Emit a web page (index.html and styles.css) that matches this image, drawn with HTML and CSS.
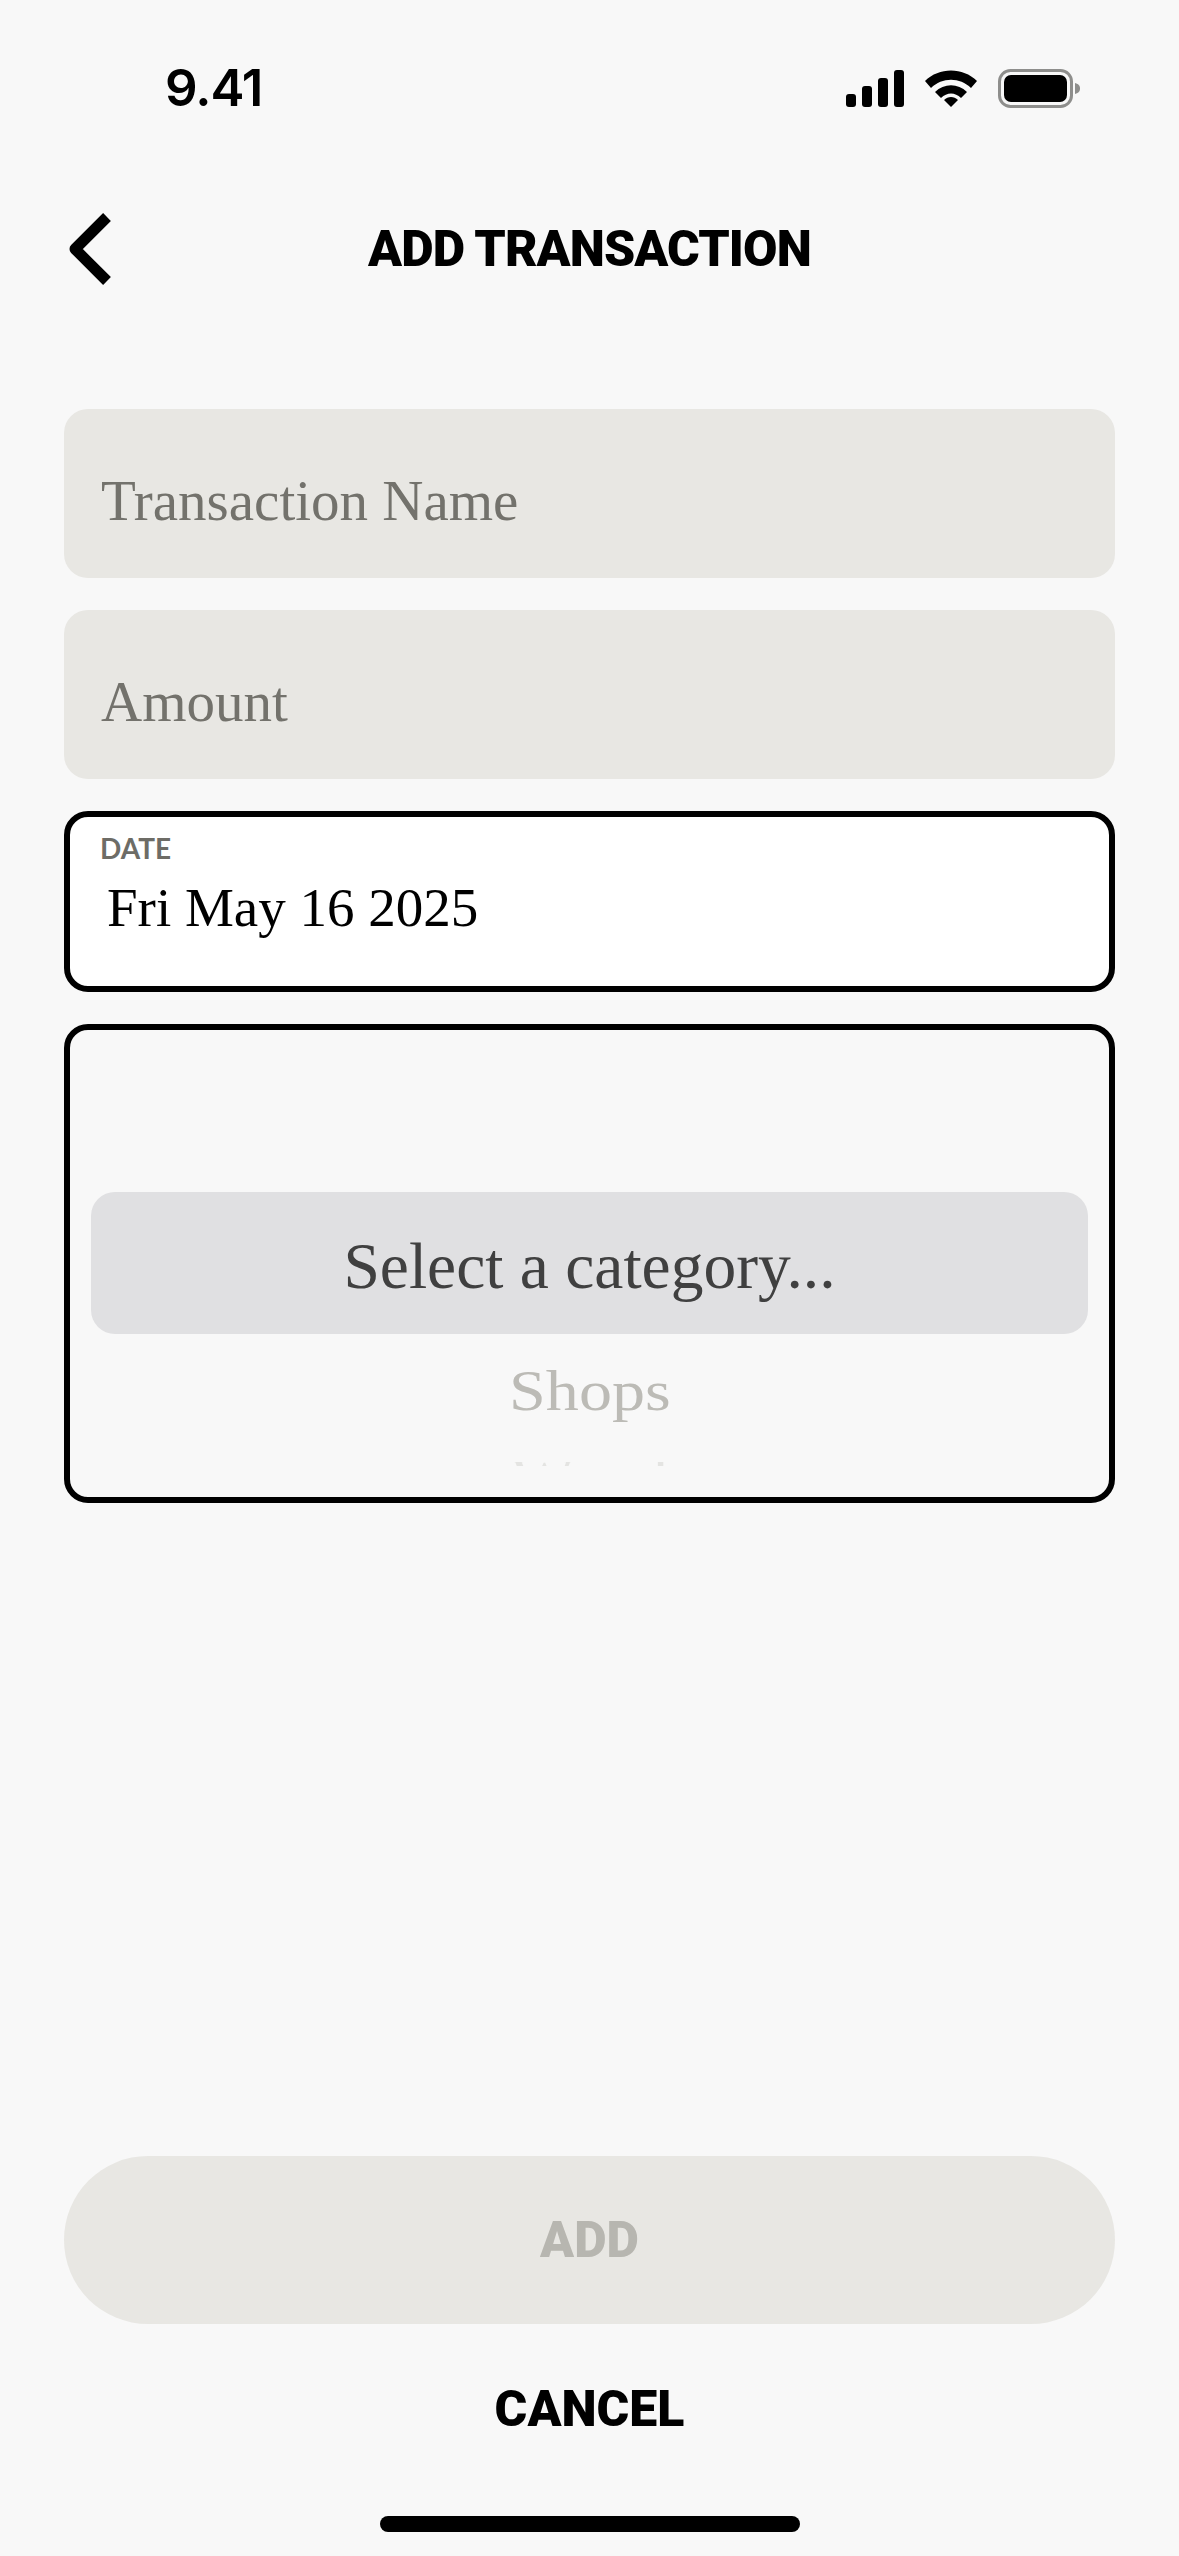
FILE: index.html
```html
<!DOCTYPE html>
<html lang="en">
<head>
    <meta charset="UTF-8">
    <meta name="viewport" content="width=device-width, initial-scale=1.0">
    <title>Add Transaction</title>
    <link rel="stylesheet" href="styles.css">
</head>
<body>
    <div class="screen">
        <div class="status-bar">
            <span class="clock">9.41</span>
            <div class="status-icons">
                <svg class="ic-signal" width="58" height="37" viewBox="0 0 58 37">
                    <rect x="0" y="24" width="10" height="13" rx="3"/>
                    <rect x="16" y="16" width="10" height="21" rx="3"/>
                    <rect x="32" y="8" width="10" height="29" rx="3"/>
                    <rect x="48" y="0" width="10" height="37" rx="3"/>
                </svg>
                <svg class="ic-wifi" width="52" height="37" viewBox="0 0 52 37">
                    <path d="M0 11 C14 -3 38 -3 52 11 L46 18 C35 7 17 7 6 18 Z"/>
                    <path d="M10 22 C19 13 33 13 42 22 L36 28 C30 22 22 22 16 28 Z"/>
                    <path d="M19 30 C23 26 29 26 33 30 L26 37 Z"/>
                </svg>
                <svg class="ic-battery" width="83" height="39" viewBox="0 0 83 39">
                    <rect x="1.5" y="1.5" width="72" height="36" rx="11" fill="none" stroke="#8e8e8c" stroke-width="3"/>
                    <rect x="6" y="6" width="63" height="27" rx="7"/>
                    <path d="M77 14 C81 15 82 17 82 19.5 C82 22 81 24 77 25 Z" fill="#8e8e8c"/>
                </svg>
            </div>
        </div>

        <header class="topbar">
            <svg class="back" width="48" height="72" viewBox="0 0 48 72">
                <path d="M43 4 L11 36 L43 68" fill="none" stroke="#000" stroke-width="11" stroke-linejoin="round"/>
            </svg>
            <h1 class="title">ADD TRANSACTION</h1>
        </header>

        <form class="form">
            <div class="field">Transaction Name</div>
            <div class="field">Amount</div>
            <div class="date-field">
                <label class="date-label">DATE</label>
                <div class="date-value">Fri May 16 2025</div>
            </div>
            <div class="picker">
                <div class="picker-selected">Select a category...</div>
                <div class="picker-next">Shops</div>
                <div class="picker-clip">Wood</div>
            </div>
        </form>

        <div class="actions">
            <button class="btn-add" type="button">ADD</button>
            <button class="btn-cancel" type="button">CANCEL</button>
        </div>
        <div class="home-bar"></div>
    </div>
</body>
</html>
```
FILE: styles.css
```css
*{
    box-sizing: border-box;
}
html,body{
    margin: 0;
    padding: 0;
    background: #f8f8f8;
}
.screen{
    width: 1179px;
    height: 2556px;
    display: flex;
    flex-direction: column;
    padding: 0 64px;
    overflow: hidden;
}

/* status bar */
.status-bar{
    height: 198px;
    padding: 62px 34px 0 101px;
    display: flex;
    justify-content: space-between;
    align-items: flex-start;
}
.clock{
    font-family: Inter, sans-serif;
    font-weight: 600;
    font-size: 51px;
    line-height: 52px;
    letter-spacing: -1px;
    color: #000;
}
.status-icons{
    display: flex;
    align-items: center;
    gap: 21px;
    padding-top: 7px;
}

/* header */
.topbar{
    position: relative;
    height: 100px;
    display: flex;
    align-items: center;
    justify-content: center;
}
.back{
    position: absolute;
    left: 0;
    top: 15px;
}
.title{
    margin: 2px 0 0;
    font-family: Roboto, sans-serif;
    font-weight: 900;
    font-size: 50px;
    letter-spacing: -0.9px;
    color: #000;
}

/* form */
.form{
    margin-top: 111px;
    display: flex;
    flex-direction: column;
    gap: 32px;
}
.field{
    height: 169px;
    background: #e8e7e3;
    border-radius: 24px;
    padding: 14px 37px 0;
    display: flex;
    align-items: center;
    font-family: "Liberation Serif", serif;
    font-size: 57px;
    color: #73726c;
}
.date-field{
    height: 181px;
    background: #fff;
    border: 6px solid #000;
    border-radius: 24px;
    padding: 14px 30px;
}
.date-label{
    display: block;
    font-family: Lato, sans-serif;
    font-weight: 700;
    font-size: 28px;
    line-height: 34px;
    color: #6d6c66;
}
.date-value{
    margin: 10px 0 0 7px;
    font-family: "Liberation Serif", serif;
    font-size: 55px;
    line-height: 66px;
    color: #000;
}
.picker{
    height: 479px;
    border: 6px solid #000;
    border-radius: 24px;
    padding: 162px 21px 0;
    display: flex;
    flex-direction: column;
    align-items: center;
    overflow: hidden;
}
.picker-selected{
    width: 100%;
    height: 142px;
    flex: none;
    background: #e0e0e2;
    border-radius: 24px;
    padding-top: 6px;
    display: flex;
    align-items: center;
    justify-content: center;
    font-family: "Liberation Serif", serif;
    font-size: 65.5px;
    color: #404040;
}
.picker-next{
    margin-top: 21px;
    font-family: "Liberation Serif", serif;
    font-size: 58px;
    line-height: 72px;
    color: #bcbbb6;
    transform: scaleX(1.14);
}
.picker-clip{
    margin-top: 35px;
    height: 4px;
    overflow: hidden;
    font-family: "Liberation Serif", serif;
    font-size: 58px;
    line-height: 34px;
    color: #e4e4e2;
    transform: scaleX(1.14);
}

/* bottom buttons */
.actions{
    margin-top: auto;
    display: flex;
    flex-direction: column;
    align-items: center;
}
.btn-add{
    width: 100%;
    height: 168px;
    border: 0;
    border-radius: 84px;
    background: #e8e7e3;
    font-family: Roboto, sans-serif;
    font-weight: 900;
    font-size: 50px;
    color: #b7b6b0;
}
.btn-cancel{
    margin-top: 50px;
    height: 70px;
    padding: 0;
    border: 0;
    background: none;
    font-family: Roboto, sans-serif;
    font-weight: 900;
    font-size: 50px;
    color: #000;
}
.home-bar{
    flex: none;
    align-self: center;
    width: 420px;
    height: 16px;
    margin: 72px 0 24px;
    background: #000;
    border-radius: 8px;
}
```
